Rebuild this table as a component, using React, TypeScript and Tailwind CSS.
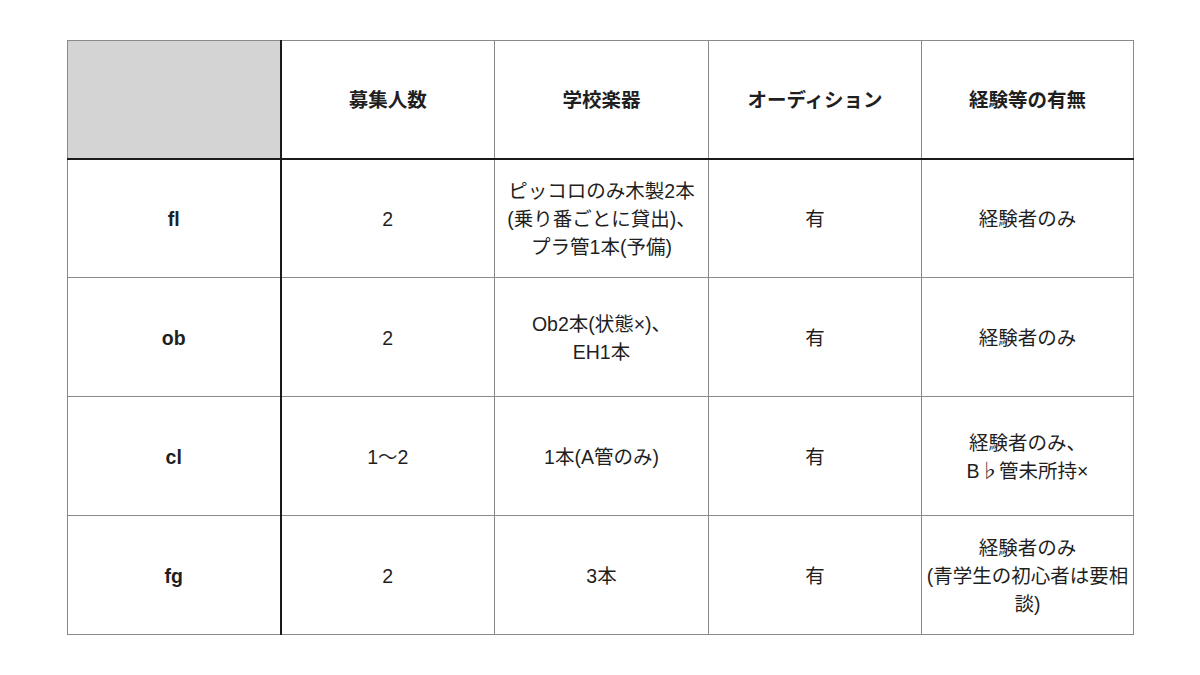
const headers = ['募集人数', '学校楽器', 'オーディション', '経験等の有無'];

const rows: { part: string; cells: string[][] }[] = [
  {
    part: 'fl',
    cells: [['2'], ['ピッコロのみ木製2本', '(乗り番ごとに貸出)、', 'プラ管1本(予備)'], ['有'], ['経験者のみ']],
  },
  { part: 'ob', cells: [['2'], ['Ob2本(状態×)、', 'EH1本'], ['有'], ['経験者のみ']] },
  { part: 'cl', cells: [['1〜2'], ['1本(A管のみ)'], ['有'], ['経験者のみ、', 'B♭管未所持×']] },
  { part: 'fg', cells: [['2'], ['3本'], ['有'], ['経験者のみ', '(青学生の初心者は要相', '談)']] },
];

export default function App() {
  return (
    <div
      className="w-[1200px] h-[675px] bg-white pt-[40px] pl-[67px]"
      style={{ fontFamily: '"Liberation Sans", "Noto Sans CJK JP", sans-serif' }}
    >
      <table className="border-collapse table-fixed w-[1066px] text-[19.5px] leading-[28px] text-[#1f1f1f]">
        <colgroup>
          <col className="w-[213px]" />
          <col className="w-[214px]" />
          <col className="w-[214px]" />
          <col className="w-[213px]" />
          <col className="w-[212px]" />
        </colgroup>
        <thead>
          <tr className="h-[118px]">
            <th className="bg-[#d4d4d4] border border-[#8a8a8a] border-r-2 border-r-[#1a1a1a] border-b-2 border-b-[#1a1a1a]"></th>
            {headers.map((h) => (
              <th
                key={h}
                className="border border-[#8a8a8a] border-b-2 border-b-[#1a1a1a] font-bold text-center align-middle pt-[2px]"
              >
                {h}
              </th>
            ))}
          </tr>
        </thead>
        <tbody>
          {rows.map((r) => (
            <tr key={r.part} className="h-[119px]">
              <td className="border border-[#8a8a8a] border-r-2 border-r-[#1a1a1a] font-bold text-center align-middle pt-[2px]">
                {r.part}
              </td>
              {r.cells.map((lines, i) => (
                <td key={i} className="border border-[#8a8a8a] text-center align-middle pt-[2px]">
                  {lines.map((l) => (
                    <div key={l}>{l}</div>
                  ))}
                </td>
              ))}
            </tr>
          ))}
        </tbody>
      </table>
    </div>
  );
}
